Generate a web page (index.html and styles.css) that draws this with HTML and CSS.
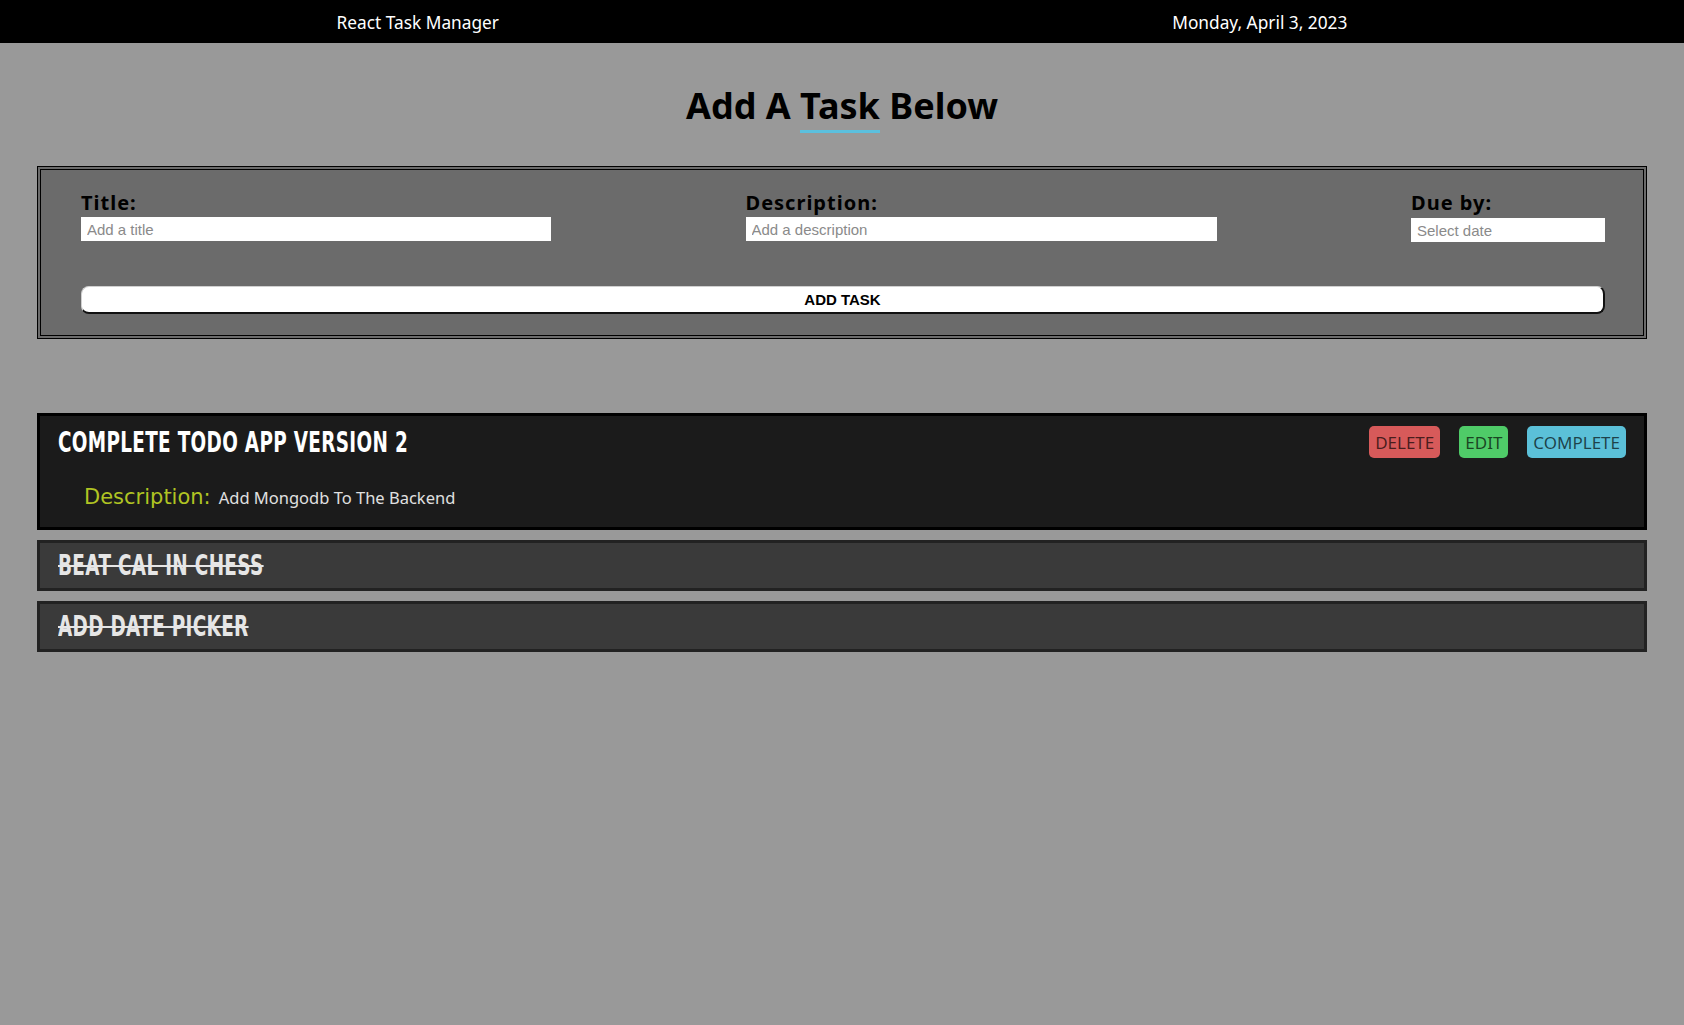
FILE: index.html
```html
<!DOCTYPE html>
<html lang="en">
<head>
<meta charset="utf-8">
<title>React Task Manager</title>
<link rel="stylesheet" href="styles.css">
</head>
<body>
<nav class="navbar">
  <span class="nav-item">React Task Manager</span>
  <span class="nav-item">Monday, April 3, 2023</span>
</nav>
<h1 class="heading">Add A <span class="accent">Task</span> Below</h1>
<form class="task-form">
  <div class="fields">
    <div class="field">
      <label class="field-label">Title:</label>
      <input class="field-input input-title" type="text" placeholder="Add a title">
    </div>
    <div class="field">
      <label class="field-label">Description:</label>
      <input class="field-input input-desc" type="text" placeholder="Add a description">
    </div>
    <div class="field">
      <label class="field-label">Due by:</label>
      <input class="field-input input-date" type="text" placeholder="Select date">
    </div>
  </div>
  <button class="add-btn" type="button">ADD TASK</button>
</form>
<section class="tasks">
  <div class="task task-open">
    <div class="task-head">
      <span class="task-title">Complete Todo App Version 2</span>
      <div class="task-actions">
        <button class="act act-delete" type="button">DELETE</button>
        <button class="act act-edit" type="button">EDIT</button>
        <button class="act act-complete" type="button">COMPLETE</button>
      </div>
    </div>
    <div class="task-desc">
      <span class="desc-label">Description:</span>
      <span class="desc-text">Add Mongodb To The Backend</span>
    </div>
  </div>
  <div class="task task-done">
    <span class="task-title">Beat Cal In Chess</span>
  </div>
  <div class="task task-done">
    <span class="task-title">Add Date Picker</span>
  </div>
</section>
</body>
</html>
```
FILE: styles.css
```css
* { box-sizing: border-box; }
body {
  margin: 0;
  background: #999999;
  font-family: "Noto Sans", "Open Sans", sans-serif;
}
.navbar {
  height: 43px;
  padding-top: 2px;
  background: #000;
  display: flex;
  justify-content: space-around;
  align-items: center;
  color: #fff;
  font-size: 17.3px;
}
.heading {
  margin: 39px 0 0;
  text-align: center;
  font-size: 36px;
  font-weight: 700;
  line-height: 48px;
  color: #000;
}
.accent {
  border-bottom: 3px solid #5bc0de;
}
.task-form {
  margin: 36px 37px 0;
  border: 4px double #000;
  background: #6b6b6b;
  padding: 19px 38px 21px 40px;
}
.fields {
  display: flex;
  justify-content: space-between;
}
.field {
  display: flex;
  flex-direction: column;
}
.field-label {
  font-size: 20px;
  font-weight: 700;
  letter-spacing: 1px;
  line-height: 28px;
  color: #000;
}
.field-input {
  height: 24px;
  border: none;
  padding: 0 6px;
  font-family: "Liberation Sans", Arial, sans-serif;
  font-size: 15px;
  color: #000;
  background: #fff;
  outline: none;
}
.field-input::placeholder { color: #8a8a8a; }
.input-title { width: 470px; }
.input-desc { width: 471px; }
.input-date { width: 194px; margin-top: 1px; }
.add-btn {
  display: block;
  width: 100%;
  height: 28px;
  margin-top: 44px;
  background: #fff;
  border-style: solid;
  border-width: 1px 2px 2px 1px;
  border-color: #d0d0d0 #111 #111 #d0d0d0;
  border-radius: 8px;
  font-family: "Liberation Sans", Arial, sans-serif;
  font-size: 15px;
  font-weight: 700;
  color: #000;
}
.tasks {
  margin: 74px 37px 0;
  display: flex;
  flex-direction: column;
  gap: 10px;
}
.task {
  padding: 10px 18px;
}
.task-open {
  background: #1b1b1b;
  border: 3px solid #000;
  padding-bottom: 18px;
}
.task-done {
  background: #3a3a3a;
  border: 3px solid #222;
  padding: 9px 18px;
}
.task-head {
  display: flex;
  justify-content: space-between;
  align-items: center;
}
.task-title {
  display: block;
  font-family: "DejaVu Sans", sans-serif;
  font-weight: 700;
  font-size: 29px;
  line-height: 27px;
  text-transform: uppercase;
  color: #fff;
  letter-spacing: 0.5px;
  transform: scaleX(0.635);
  transform-origin: left center;
  white-space: nowrap;
}
.task-done .task-title {
  color: #e6e6e6;
  text-decoration: line-through;
  text-decoration-thickness: 2px;
}
.task-actions {
  display: flex;
  gap: 19px;
}
.act {
  height: 32px;
  padding: 0 6px;
  border: none;
  border-radius: 5px;
  font-family: "Noto Sans", sans-serif;
  font-size: 17px;
  color: rgba(0, 0, 0, 0.68);
}
.act-delete { background: #d75a5a; }
.act-edit { background: #4fcb68; }
.act-complete { background: #5bc0d8; }
.task-desc {
  margin-top: 27px;
  padding-left: 26px;
  display: flex;
  align-items: baseline;
  gap: 8px;
}
.desc-label {
  font-family: "DejaVu Sans", sans-serif;
  font-size: 21px;
  color: #b0c423;
}
.desc-text {
  font-size: 16.5px;
  color: #e0e0e0;
}
```
